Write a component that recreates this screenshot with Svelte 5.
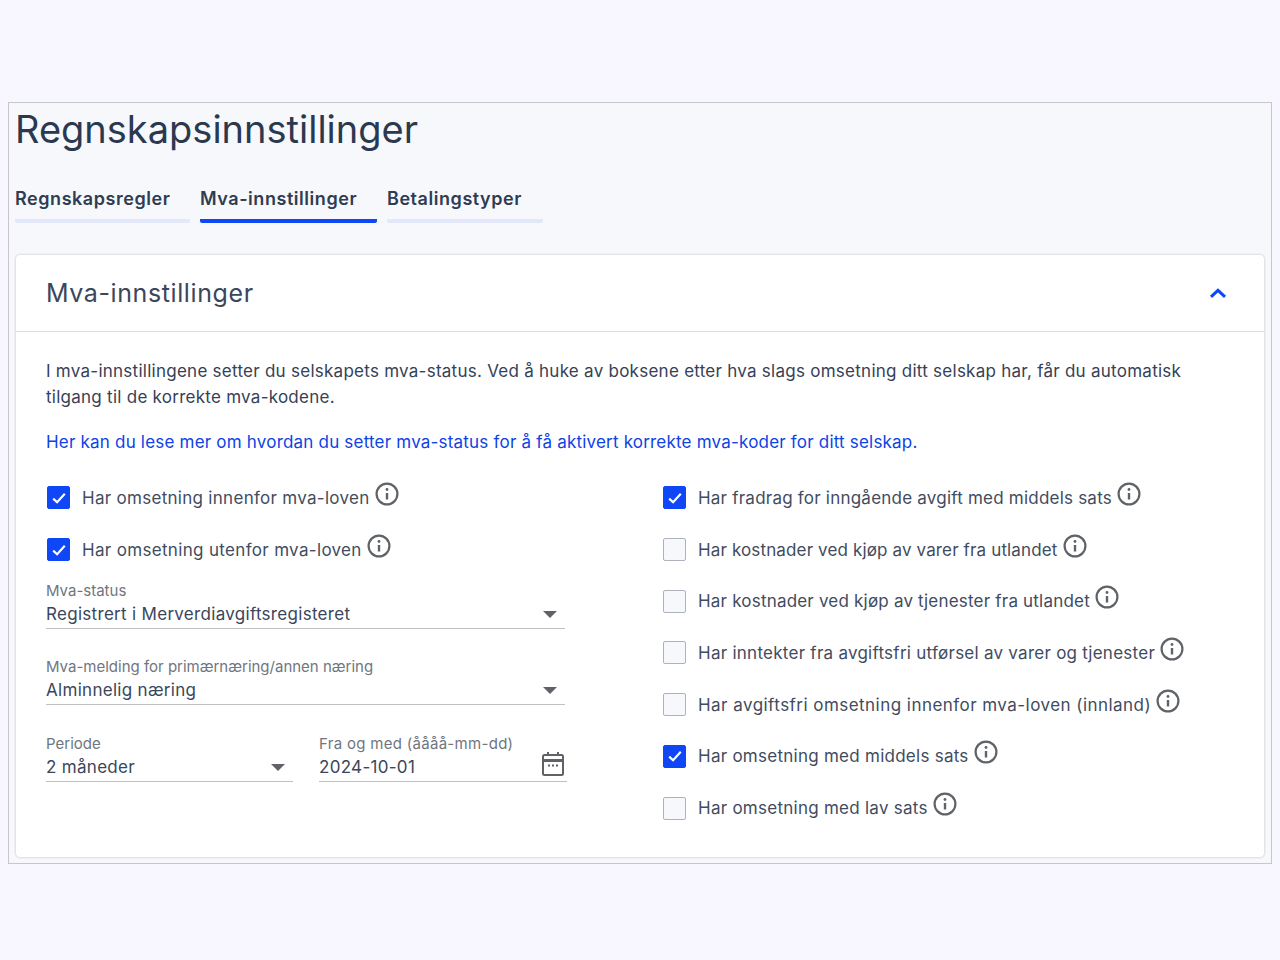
<script>
  const tabs = [
    { label: 'Regnskapsregler', width: 175 },
    { label: 'Mva-innstillinger', width: 177, active: true },
    { label: 'Betalingstyper', width: 156 }
  ];
  // spacing evens out the width difference to the original typeface, row by row
  const leftChecks = [
    { label: 'Har omsetning innenfor mva-loven', checked: true, spacing: 0.29 },
    { label: 'Har omsetning utenfor mva-loven', checked: true, spacing: 0.33 }
  ];
  const rightChecks = [
    { label: 'Har fradrag for inngående avgift med middels sats', checked: true, spacing: 0.22 },
    { label: 'Har kostnader ved kjøp av varer fra utlandet', checked: false, spacing: 0.14 },
    { label: 'Har kostnader ved kjøp av tjenester fra utlandet', checked: false, spacing: 0.2 },
    { label: 'Har inntekter fra avgiftsfri utførsel av varer og tjenester', checked: false, spacing: 0.26 },
    { label: 'Har avgiftsfri omsetning innenfor mva-loven (innland)', checked: false, spacing: 0.46 },
    { label: 'Har omsetning med middels sats', checked: true, spacing: 0.26 },
    { label: 'Har omsetning med lav sats', checked: false, spacing: 0.26 }
  ];
</script>

{#snippet check(item)}
  <div class="check">
    <span class="box" class:on={item.checked}>
      {#if item.checked}
        <svg width="16" height="16" viewBox="0 0 16 16"><path d="M2.2 8.6l3.9 3.6L13.8 3.8" fill="none" stroke="#fff" stroke-width="2.2" /></svg>
      {/if}
    </span>
    <span class="check-label" style="letter-spacing: {item.spacing}px">{item.label}</span>
    <svg class="info" width="24" height="24" viewBox="0 0 24 24" fill="none" stroke="#5f6368">
      <circle cx="12" cy="12" r="10.4" stroke-width="2.2" />
      <path d="M12 11v6.5" stroke-width="2.4" />
      <circle cx="12" cy="7.5" r="1.4" fill="#5f6368" stroke="none" />
    </svg>
  </div>
{/snippet}

{#snippet caret()}
  <svg class="caret" width="14" height="7" viewBox="0 0 14 7"><path d="M0 0h14L7 7z" fill="#5f6368" /></svg>
{/snippet}

<div class="frame">
  <h1>Regnskapsinnstillinger</h1>
  <div class="tabs">
    {#each tabs as tab}
      <div class="tab" class:active={tab.active} style="width: {tab.width}px">{tab.label}</div>
    {/each}
  </div>

  <section class="card">
    <header>
      <h2>Mva-innstillinger</h2>
      <svg width="18" height="10" viewBox="0 0 18 10"><path d="M2 8.8l7-6.4 7 6.4" fill="none" stroke="#0f46f5" stroke-width="3" /></svg>
    </header>
    <div class="body">
      <p class="intro">I mva-innstillingene setter du selskapets mva-status. Ved å huke av boksene etter hva slags omsetning ditt selskap har, får du automatisk tilgang til de korrekte mva-kodene.</p>
      <p class="link">Her kan du lese mer om hvordan du setter mva-status for å få aktivert korrekte mva-koder for ditt selskap.</p>

      <div class="cols">
        <div class="col left">
          {#each leftChecks as item}
            {@render check(item)}
          {/each}
          <div class="field status">
            <span class="field-label">Mva-status</span>
            <div class="value">Registrert i Merverdiavgiftsregisteret {@render caret()}</div>
          </div>
          <div class="field melding">
            <span class="field-label">Mva-melding for primærnæring/annen næring</span>
            <div class="value">Alminnelig næring {@render caret()}</div>
          </div>
          <div class="pair">
            <div class="field period">
              <span class="field-label">Periode</span>
              <div class="value">2 måneder {@render caret()}</div>
            </div>
            <div class="field date">
              <span class="field-label spaced">Fra og med (åååå-mm-dd)</span>
              <div class="value">
                2024-10-01
                <svg class="cal" width="24" height="26" viewBox="0 0 24 26" fill="none" stroke="#5f6368" stroke-width="2">
                  <rect x="2" y="4" width="20" height="20" rx="1.5" />
                  <path d="M2 9.5h20" stroke-width="3" />
                  <path d="M7 1v4M17 1v4" />
                  <path d="M7 14.5h2M11 14.5h2M15 14.5h2" />
                </svg>
              </div>
            </div>
          </div>
        </div>
        <div class="col right">
          {#each rightChecks as item}
            {@render check(item)}
          {/each}
        </div>
      </div>
    </div>
  </section>
</div>

<style>
  :global(body) {
    background: #f8f6ff;
  }
  .frame {
    margin: 102px 8px 0;
    height: 762px;
    box-sizing: border-box;
    border: 1px solid #c6c6cc;
    background: #f6f8fc;
    padding: 0 6px;
    font-family: Inter, "Liberation Sans", sans-serif;
    color: #364156;
  }
  h1 {
    margin: 0;
    padding-top: 2px;
    font-size: 38px;
    line-height: 48px;
    font-weight: 400;
    color: #2b3950;
  }
  .tabs {
    display: flex;
    gap: 10px;
    margin-top: 34px;
  }
  .tab {
    box-sizing: border-box;
    padding-bottom: 8px;
    border-bottom: 4px solid #e2e8fa;
    font-size: 18px;
    line-height: 24px;
    font-weight: 600;
    letter-spacing: 0.55px;
    color: #2f3c52;
    border-radius: 0 0 2px 2px;
    white-space: nowrap;
  }
  .tab.active {
    border-bottom-color: #0f46f5;
  }
  .card {
    margin-top: 31px;
    height: 604px;
    box-sizing: border-box;
    border: 1px solid #e3e4e8;
    border-radius: 5px;
    background: #fff;
    box-shadow: 0 0 0 1px #f0f1f5;
  }
  header {
    height: 77px;
    box-sizing: border-box;
    border-bottom: 1px solid #dcdde0;
    padding: 0 37px 0 30px;
    display: flex;
    align-items: center;
    justify-content: space-between;
  }
  h2 {
    margin: 0;
    font-size: 25px;
    font-weight: 400;
    letter-spacing: 0.6px;
    color: #3b475c;
  }
  .body {
    padding: 26px 31px 0 30px;
    font-size: 17px;
    line-height: 26px;
    letter-spacing: 0.26px;
  }
  p {
    margin: 0;
  }
  .intro {
    width: 1170px;
  }
  .link {
    margin-top: 19px;
    color: #0e42e6;
    letter-spacing: 0.2px;
  }
  .cols {
    display: flex;
    margin-top: 31.4px;
  }
  .col {
    display: flex;
    flex-direction: column;
  }
  .left {
    width: 617px;
  }
  .check {
    display: flex;
    align-items: center;
    height: 23px;
    margin-bottom: 28.7px;
    color: #414c60;
    white-space: nowrap;
  }
  .left .check {
    padding-left: 1px;
  }
  .box {
    flex: none;
    width: 23px;
    height: 23px;
    box-sizing: border-box;
    border: 1px solid #aeb2ba;
    border-radius: 2px;
    background: #f6f8fc;
    margin-right: 12px;
    display: flex;
    align-items: center;
    justify-content: center;
  }
  .box.on {
    background: #0f46f5;
    border-color: #0f46f5;
  }
  .info {
    margin: -8px 0 0 5px;
    flex: none;
  }
  .left .field {
    width: 519px;
  }
  .field {
    display: flex;
    flex-direction: column;
    color: #3b475c;
  }
  .status {
    margin-top: -9px;
  }
  .melding {
    margin-top: 28px;
  }
  .field-label {
    font-size: 15px;
    line-height: 20px;
    letter-spacing: 0;
    color: #6f7680;
    white-space: nowrap;
  }
  .field-label.spaced {
    letter-spacing: 0.3px;
  }
  .value {
    position: relative;
    height: 28px;
    line-height: 27px;
    box-sizing: border-box;
    border-bottom: 1px solid #bfc1c5;
    color: #3a465b;
    white-space: nowrap;
    letter-spacing: 0.3px;
  }
  .caret {
    position: absolute;
    right: 8px;
    top: 10px;
  }
  .cal {
    position: absolute;
    right: 2px;
    top: -3px;
  }
  .pair {
    display: flex;
    gap: 26px;
    margin-top: 29px;
    width: 521px;
  }
  .pair .period {
    width: 247px;
  }
  .pair .date {
    width: 248px;
  }
</style>
